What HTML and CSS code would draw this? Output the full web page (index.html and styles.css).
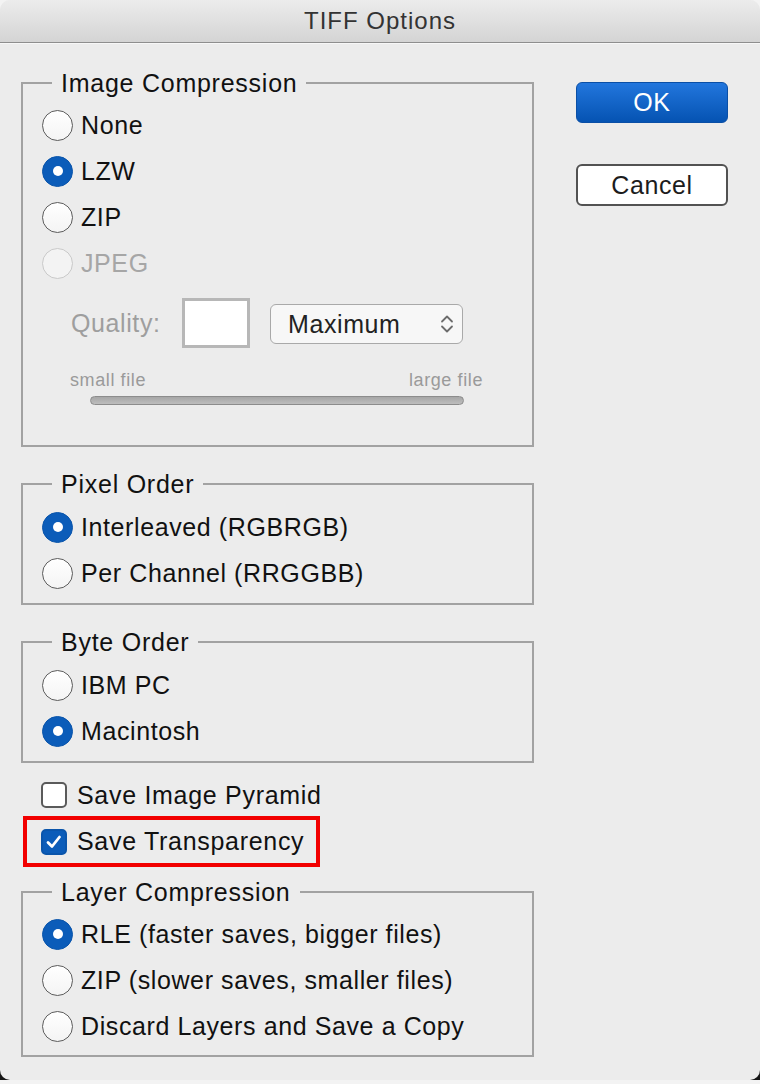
FILE: index.html
```html
<!DOCTYPE html>
<html lang="en">
<head>
<meta charset="utf-8">
<title>TIFF Options</title>
<link rel="stylesheet" href="styles.css">
</head>
<body>
<div class="window">
  <div class="titlebar">TIFF Options</div>
  <div class="main">
    <div class="left">
      <fieldset class="group">
        <legend>Image Compression</legend>
        <div class="row"><span class="radio"></span><span class="label">None</span></div>
        <div class="row"><span class="radio on"></span><span class="label">LZW</span></div>
        <div class="row"><span class="radio"></span><span class="label">ZIP</span></div>
        <div class="row disabled"><span class="radio"></span><span class="label">JPEG</span></div>
        <div class="quality">
          <span class="qlabel">Quality:</span>
          <span class="qinput"></span>
          <span class="select">
            <span class="select-text">Maximum</span>
            <svg class="chev" width="14" height="22" viewBox="0 0 14 22"><polyline points="2,8.5 7,3.5 12,8.5" fill="none" stroke="#6c6c6c" stroke-width="1.8" stroke-linecap="round" stroke-linejoin="round"/><polyline points="2,13.5 7,18.5 12,13.5" fill="none" stroke="#6c6c6c" stroke-width="1.8" stroke-linecap="round" stroke-linejoin="round"/></svg>
          </span>
        </div>
        <div class="sizes"><span>small file</span><span>large file</span></div>
        <div class="slider"></div>
      </fieldset>

      <fieldset class="group">
        <legend>Pixel Order</legend>
        <div class="row"><span class="radio on"></span><span class="label">Interleaved (RGBRGB)</span></div>
        <div class="row"><span class="radio"></span><span class="label">Per Channel (RRGGBB)</span></div>
      </fieldset>

      <fieldset class="group">
        <legend>Byte Order</legend>
        <div class="row"><span class="radio"></span><span class="label">IBM PC</span></div>
        <div class="row"><span class="radio on"></span><span class="label">Macintosh</span></div>
      </fieldset>

      <div class="checks">
        <div class="crow"><span class="check"></span><span class="label">Save Image Pyramid</span></div>
        <div class="crow highlight"><span class="check on"><svg width="22" height="22" viewBox="0 0 22 22"><polyline points="5,11.5 9,15.5 16.5,6" fill="none" stroke="#fff" stroke-width="2.8" stroke-linecap="round" stroke-linejoin="round"/></svg></span><span class="label">Save Transparency</span></div>
      </div>

      <fieldset class="group layer">
        <legend>Layer Compression</legend>
        <div class="row"><span class="radio on"></span><span class="label">RLE (faster saves, bigger files)</span></div>
        <div class="row"><span class="radio"></span><span class="label">ZIP (slower saves, smaller files)</span></div>
        <div class="row"><span class="radio"></span><span class="label">Discard Layers and Save a Copy</span></div>
      </fieldset>
    </div>
    <div class="right">
      <div class="btn primary">OK</div>
      <div class="btn secondary">Cancel</div>
    </div>
  </div>
</div>
</body>
</html>
```

FILE: styles.css
```css
html {
  background: linear-gradient(to bottom, #f3f3f3 0, #f3f3f3 50%, #151515 50%, #151515 100%);
}
body {
  margin: 0;
  font-family: "Liberation Sans", Arial, sans-serif;
  color: #111;
}
.window {
  width: 760px;
  height: 1080px;
  background: #ececec;
  border-radius: 10px;
  overflow: hidden;
}
.titlebar {
  height: 42px;
  border-bottom: 1px solid #8e8e8e;
  background: linear-gradient(to bottom, #ececec, #d4d4d4);
  display: flex;
  align-items: center;
  justify-content: center;
  font-size: 24px;
  letter-spacing: 1px;
  color: #333;
  box-shadow: 0 1px 0 #f7f7f7;
}
.main {
  display: flex;
  gap: 42px;
  padding: 25px 0 0 21px;
}
.left {
  width: 513px;
  display: flex;
  flex-direction: column;
}
.group {
  margin: 0;
  min-width: 0;
  border: 2px solid #a2a2a2;
  padding: 4px 10px 7px 19px;
  display: flex;
  flex-direction: column;
}
.group + .group {
  margin-top: 22px;
  padding-top: 5px;
}
.group:first-child {
  padding-bottom: 40px;
}
.group.layer {
  margin-top: 10px;
  padding-top: 4px;
  padding-bottom: 6px;
}
legend {
  font-size: 25px;
  letter-spacing: 0.75px;
  line-height: 30px;
  padding: 0 9px;
  margin-left: 10px;
}
.row {
  height: 46px;
  display: flex;
  align-items: center;
  gap: 8px;
  font-size: 25px;
  letter-spacing: 0.6px;
}
.radio {
  width: 31px;
  height: 31px;
  box-sizing: border-box;
  border-radius: 50%;
  border: 1.5px solid #5c5c5c;
  background: linear-gradient(to bottom, #ffffff, #f4f4f4);
  display: flex;
  align-items: center;
  justify-content: center;
  flex: none;
}
.radio.on {
  background: #0b5cb9;
  border-color: #0a55ab;
}
.radio.on::after {
  content: "";
  width: 10px;
  height: 10px;
  border-radius: 50%;
  background: #fff;
}
.disabled .radio {
  border-color: #c9c9c9;
  background: #f3f3f3;
}
.disabled .label {
  color: #a6a6a6;
}
.quality {
  margin-top: 12px;
  height: 50px;
  display: flex;
  align-items: center;
  padding-left: 29px;
}
.qlabel {
  width: 111px;
  font-size: 25px;
  letter-spacing: 0.6px;
  color: #9e9e9e;
}
.qinput {
  width: 68px;
  height: 50px;
  box-sizing: border-box;
  border: 3px solid #b7b7b7;
  background: #fff;
}
.select {
  margin-left: 20px;
  width: 193px;
  height: 40px;
  box-sizing: border-box;
  border: 1.5px solid #a9a9a9;
  border-radius: 6px;
  background: #f7f7f7;
  display: flex;
  align-items: center;
  justify-content: space-between;
  padding: 0 8px 0 17px;
  margin-top: 2px;
}
.select-text {
  font-size: 25px;
  letter-spacing: 0.6px;
  color: #222;
}
.chev {
  display: block;
}
.sizes {
  margin-top: 22px;
  height: 20px;
  margin-left: 28px;
  width: 413px;
  display: flex;
  justify-content: space-between;
  align-items: center;
  font-size: 18px;
  letter-spacing: 0.6px;
  color: #9a9a9a;
}
.slider {
  margin-top: 6px;
  margin-left: 48px;
  width: 374px;
  height: 9px;
  box-sizing: border-box;
  border-radius: 5px;
  border: 1.5px solid #8c8c8c;
  background: linear-gradient(to bottom, #a6a6a6, #bdbdbd);
}
.checks {
  margin-top: 11px;
  display: flex;
  flex-direction: column;
  align-items: flex-start;
}
.crow {
  height: 42px;
  display: flex;
  align-items: center;
  gap: 10px;
  padding-left: 20px;
  font-size: 25px;
  letter-spacing: 0.7px;
}
.crow.highlight {
  height: 51px;
  box-sizing: border-box;
  margin-left: 2px;
  border: 4px solid #f20000;
  padding-left: 14px;
  padding-right: 12px;
}
.check {
  width: 26px;
  height: 26px;
  box-sizing: border-box;
  border: 2px solid #5a5a5a;
  border-radius: 5px;
  background: #fff;
  display: flex;
  align-items: center;
  justify-content: center;
  flex: none;
}
.check.on {
  background: #0b5cb9;
  border-color: #0a55ab;
}
.check svg {
  display: block;
}
.right {
  width: 152px;
  padding-top: 14px;
  display: flex;
  flex-direction: column;
}
.btn {
  height: 41px;
  box-sizing: border-box;
  border-radius: 6px;
  display: flex;
  align-items: center;
  justify-content: center;
  font-size: 25px;
  letter-spacing: 0.6px;
}
.primary {
  background: linear-gradient(to bottom, #2276dd, #0553b2);
  border: 1px solid #0a4fa6;
  color: #fff;
}
.secondary {
  margin-top: 41px;
  height: 42px;
  background: #fff;
  border: 2px solid #525252;
  color: #1c1c1c;
}
```
